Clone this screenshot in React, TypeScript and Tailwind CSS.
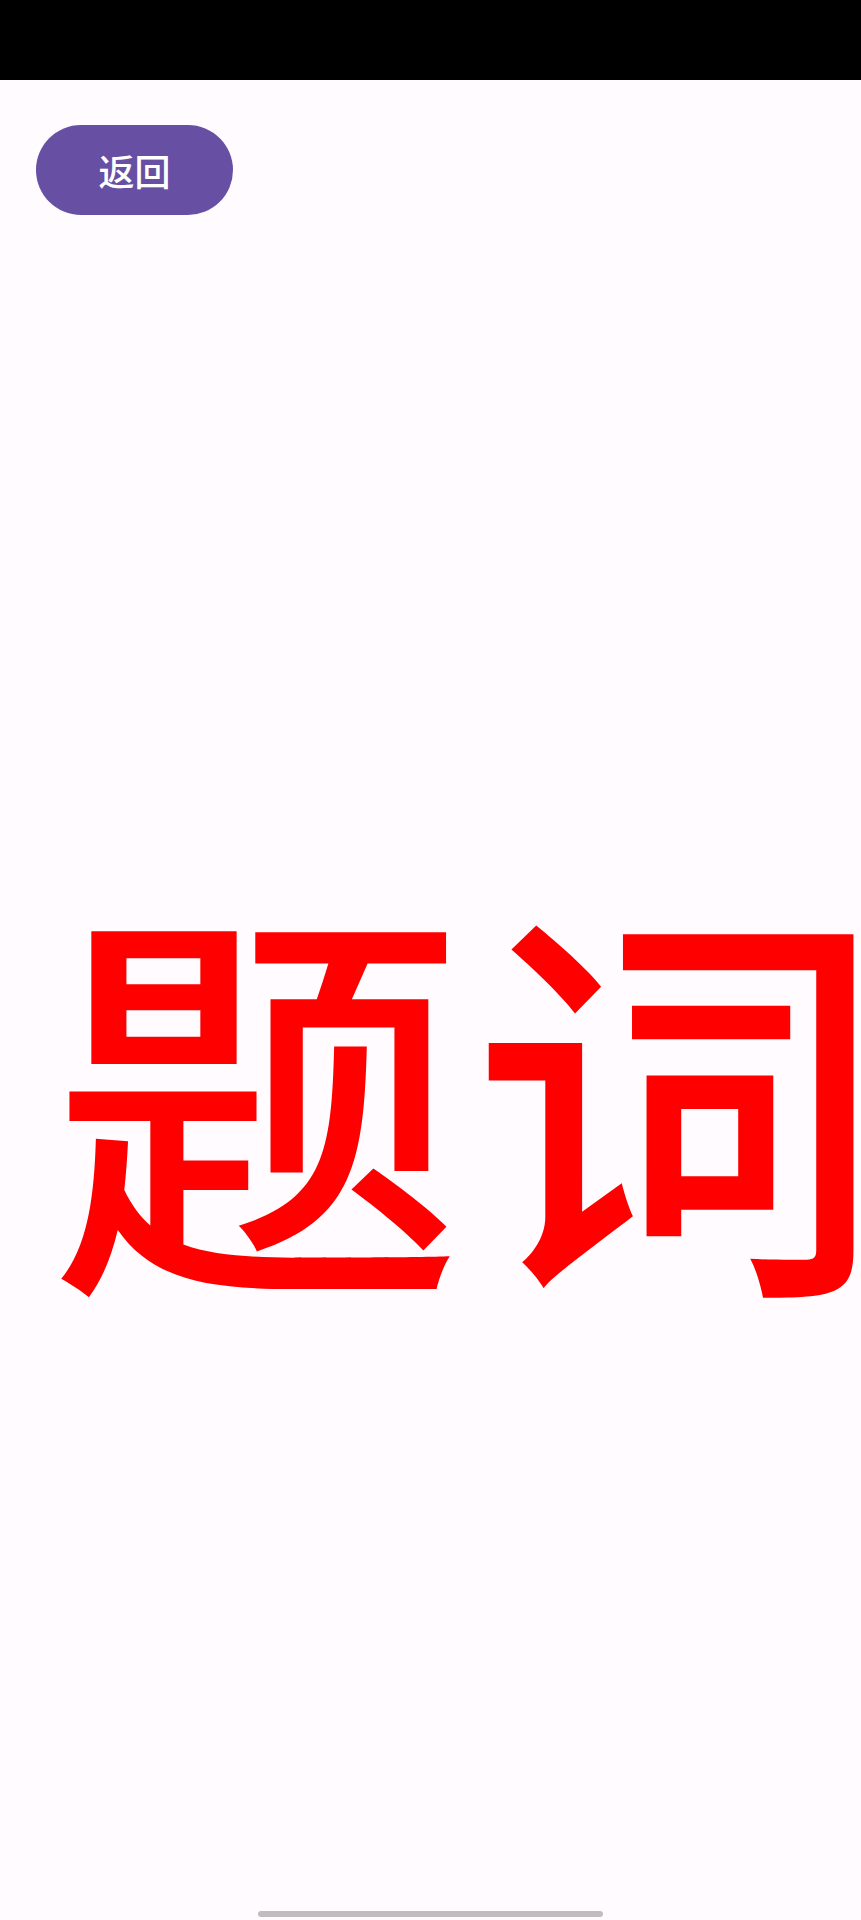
export default function App() {
  return (
    <div className="relative flex h-[1920px] w-full flex-col overflow-hidden bg-[#fffbfe] font-['Noto_Sans_CJK_SC','Noto_Sans',sans-serif]">
      {/* status bar */}
      <div className="h-[80px] w-full shrink-0 bg-black" />

      <div className="mt-[45px] pl-[36px]">
        <button
          type="button"
          className="flex h-[90px] w-[197px] items-center justify-center rounded-full bg-[#6750a4] text-[36px] font-medium leading-none text-white"
        >
          返回
        </button>
      </div>

      <div className="mt-[662px] flex whitespace-nowrap pl-[50px] text-[413px] font-medium leading-none text-[#ff0000]">
        <span className="mr-[8px]">题</span>
        <span>词</span>
      </div>

      {/* gesture handle */}
      <div className="absolute bottom-[3px] left-[258px] h-[6px] w-[345px] rounded-full bg-[#c0bcc0]" />
    </div>
  );
}
